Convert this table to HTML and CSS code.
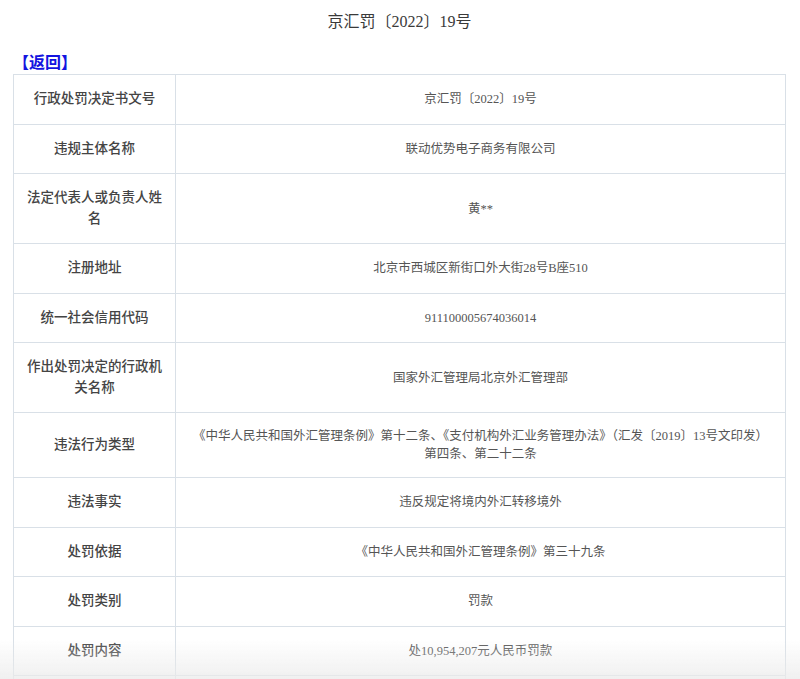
FILE: index.html
```html
<!DOCTYPE html>
<html lang="zh-CN">
<head>
<meta charset="utf-8">
<title>京汇罚〔2022〕19号</title>
<link rel="stylesheet" href="styles.css">
</head>
<body>
<div class="page">
  <h1 class="title">京汇罚〔2022〕19号</h1>
  <div class="back"><a href="#" class="back-link">【返回】</a></div>
  <table class="info">
    <colgroup><col class="col-label"><col class="col-value"></colgroup>
    <tbody>
      <tr><th>行政处罚决定书文号</th><td>京汇罚〔2022〕19号</td></tr>
      <tr><th>违规主体名称</th><td>联动优势电子商务有限公司</td></tr>
      <tr><th>法定代表人或负责人姓名</th><td>黄**</td></tr>
      <tr><th>注册地址</th><td>北京市西城区新街口外大街28号B座510</td></tr>
      <tr><th>统一社会信用代码</th><td>911100005674036014</td></tr>
      <tr><th>作出处罚决定的行政机关名称</th><td>国家外汇管理局北京外汇管理部</td></tr>
      <tr><th>违法行为类型</th><td>《中华人民共和国外汇管理条例》第十二条、《支付机构外汇业务管理办法》（汇发〔2019〕13号文印发）<br>第四条、第二十二条</td></tr>
      <tr><th>违法事实</th><td>违反规定将境内外汇转移境外</td></tr>
      <tr><th>处罚依据</th><td>《中华人民共和国外汇管理条例》第三十九条</td></tr>
      <tr><th>处罚类别</th><td>罚款</td></tr>
      <tr><th>处罚内容</th><td>处10,954,207元人民币罚款</td></tr>
      <tr><th>&nbsp;</th><td>&nbsp;</td></tr>
    </tbody>
  </table>
</div>
<div class="bottom-fade"></div>
</body>
</html>
```

FILE: styles.css
```css
html, body {
  margin: 0;
  padding: 0;
  background: #ffffff;
}

body {
  font-family: "Liberation Serif", "Noto Sans CJK SC", serif;
  color: #555;
}

.page {
  padding: 0 14px 40px 13px;
}

.title {
  margin: 0;
  padding: 10px 0 20px;
  font-size: 16px;
  line-height: 24px;
  font-weight: normal;
  text-align: center;
  color: #3a3a3a;
}

.back {
  font-size: 16px;
  line-height: 18px;
  margin-bottom: 2px;
}

.back-link {
  color: #1414e0;
  font-weight: bold;
  text-decoration: none;
}

.info {
  width: 100%;
  border-collapse: collapse;
  border: 1px solid #d9e0e7;
}

.col-label {
  width: 162px;
}

.info th,
.info td {
  border: 1px solid #d9e0e7;
  padding: 14px 6px;
  text-align: center;
  vertical-align: middle;
}

.info th {
  padding: 14px 8px;
  font-size: 13.5px;
  line-height: 20.5px;
  font-weight: 500;
  color: #444;
}

.info td {
  font-size: 12.5px;
  line-height: 18px;
  color: #555;
}

.bottom-fade {
  position: fixed;
  left: 0;
  right: 0;
  bottom: 0;
  height: 40px;
  pointer-events: none;
  background: linear-gradient(to bottom, rgba(235, 235, 235, 0), rgba(235, 235, 235, 0.75));
}
```
